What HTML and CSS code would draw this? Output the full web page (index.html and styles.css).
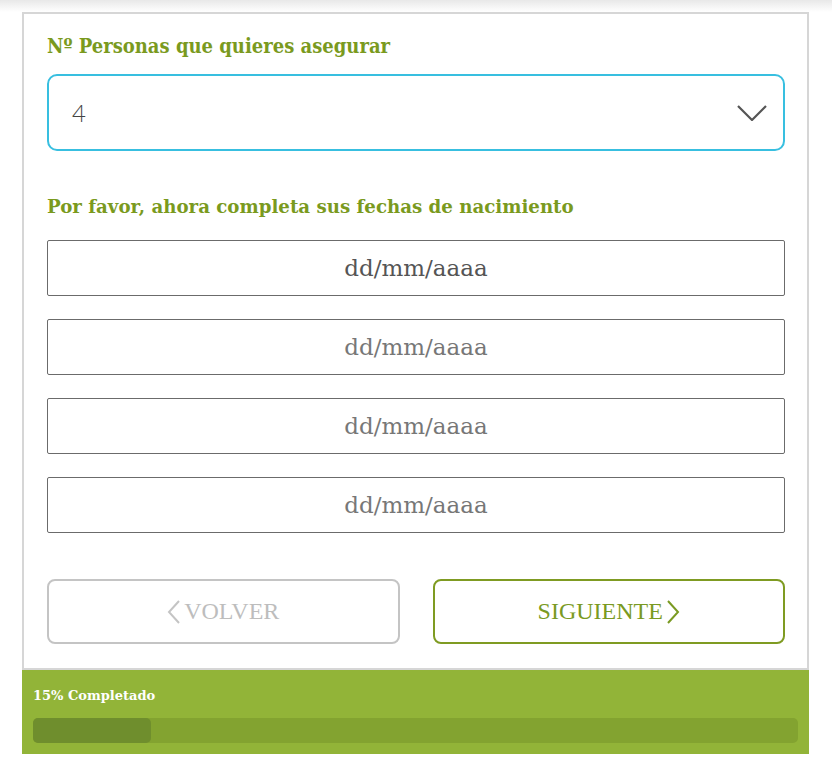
FILE: index.html
```html
<!DOCTYPE html>
<html lang="es">

<head>
    <meta charset="UTF-8">
    <meta name="viewport" content="width=device-width, initial-scale=1.0">
    <title>Personas a asegurar</title>

    <!-- Custom style. -->
    <link rel="stylesheet" href="styles.css">
</head>

<body>
    <div class="shade"></div>

    <main class="card">
        <h2 class="title title_narrow">Nº Personas que quieres asegurar</h2>
        <div class="select">
            <span class="select_value">4</span>
            <svg class="select_arrow" width="30" height="16" viewBox="0 0 30 16">
                <path d="M1 1 L15 15 L29 1" fill="none" stroke="#555" stroke-width="2.2" />
            </svg>
        </div>

        <h2 class="title title_wide">Por favor, ahora completa sus fechas de nacimiento</h2>
        <div class="dates">
            <input class="date date_active" type="text" placeholder="dd/mm/aaaa">
            <input class="date" type="text" placeholder="dd/mm/aaaa">
            <input class="date" type="text" placeholder="dd/mm/aaaa">
            <input class="date" type="text" placeholder="dd/mm/aaaa">
        </div>

        <div class="actions">
            <button class="btn btn_back">
                <svg width="14" height="24" viewBox="0 0 14 24">
                    <path d="M12 1 L2 12 L12 23" fill="none" stroke="#c4c4c4" stroke-width="2" />
                </svg>
                VOLVER
            </button>
            <button class="btn btn_next">
                SIGUIENTE
                <svg width="14" height="24" viewBox="0 0 14 24">
                    <path d="M2 1 L12 12 L2 23" fill="none" stroke="#7a9a22" stroke-width="2" />
                </svg>
            </button>
        </div>
    </main>

    <footer class="progress">
        <div class="progress_label">15% Completado</div>
        <div class="progress_track">
            <div class="progress_fill" style="width: 15.4%"></div>
        </div>
    </footer>
</body>

</html>
```

FILE: styles.css
```css
body {
    margin: 0;
    background-color: white;
    font-family: "DejaVu Serif", serif;
}

.shade {
    height: 12px;
    background: linear-gradient(#e8e8e8, #ffffff);
}

.card {
    margin: 0 23px 0 22px;
    padding: 20px 22px 24px 23px;
    border: 2px solid #d6d6d6;
    background-color: white;
}

.title {
    margin: 0;
    color: #7a9a1e;
    font-weight: bold;
}

.title_narrow {
    font-size: 20px;
    line-height: 24px;
    font-stretch: condensed;
}

.title_wide {
    margin-top: 43px;
    font-size: 18.2px;
    line-height: 26px;
}

.select {
    margin-top: 16px;
    height: 73px;
    border: 2px solid #38bfe0;
    border-radius: 10px;

    display: flex;
    justify-content: space-between;
    align-items: center;
    padding: 0 16px 0 23px;
}

.select_value {
    font-family: Lato, sans-serif;
    font-weight: 300;
    font-size: 24px;
    color: #444;
}

.dates {
    margin-top: 20px;
    display: flex;
    flex-direction: column;
    gap: 23px;
}

.date {
    box-sizing: border-box;
    width: 100%;
    height: 56px;
    margin: 0;
    border: 1px solid #6b6b6b;
    border-radius: 2px;
    background-color: white;
    text-align: center;
    font-family: "DejaVu Serif", serif;
    font-size: 23px;
    outline: none;
}

.date::placeholder {
    color: #777;
}

.date_active::placeholder {
    color: #555;
}

.actions {
    margin-top: 46px;
    display: flex;
    gap: 33px;
}

.btn {
    flex: 1;
    height: 65px;
    border-radius: 8px;
    background-color: white;

    display: flex;
    justify-content: center;
    align-items: center;
    gap: 3px;
    font-family: "Liberation Serif", serif;
    font-size: 24px;
}

.btn_back {
    border: 2px solid #c4c4c4;
    color: #bdbdbd;
}

.btn_next {
    border: 2px solid #7f9b22;
    color: #7a9a22;
}

.progress {
    margin: 0 23px 0 22px;
    padding: 16px 11px 11px;
    background-color: #92b438;
}

.progress_label {
    color: white;
    font-weight: bold;
    font-size: 13px;
    line-height: 20px;
}

.progress_track {
    margin-top: 12px;
    height: 25px;
    border-radius: 5px;
    background-color: #83a330;
}

.progress_fill {
    height: 100%;
    border-radius: 5px;
    background-color: #6f8e2d;
}
```
